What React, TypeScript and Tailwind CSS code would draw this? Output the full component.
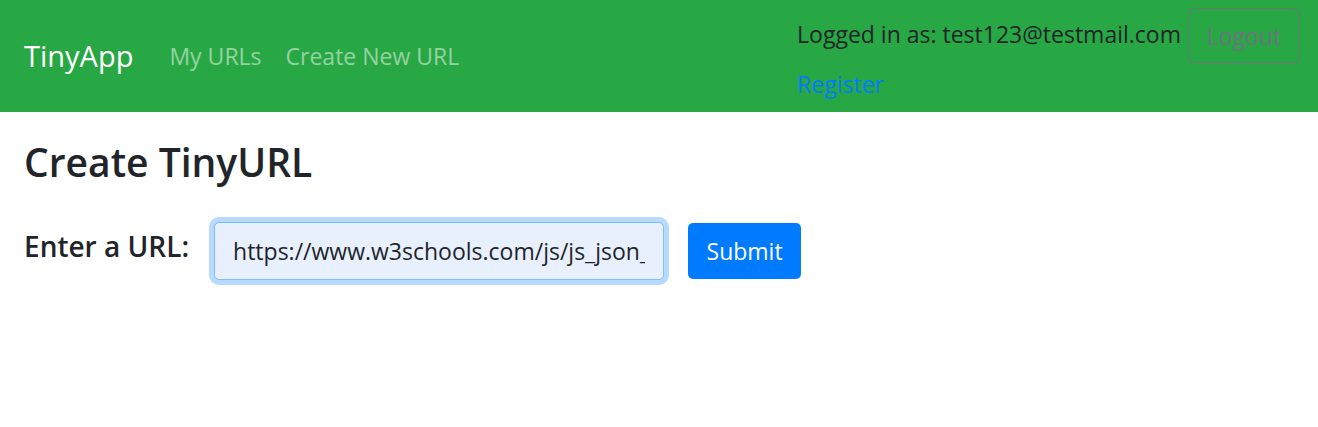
import { useState } from "react";

const font = { fontFamily: '"Open Sans", "Noto Sans", sans-serif' };

function Navbar() {
  return (
    <nav className="flex h-[112px] items-start bg-[#28a745] pl-[24px] pr-[18px]">
      <div className="flex h-full items-center">
        <a className="text-[29px] leading-[40px] text-white">TinyApp</a>
        <ul className="ml-[36px] flex gap-[24px] text-[23px] text-white/50">
          <li>My URLs</li>
          <li>Create New URL</li>
        </ul>
      </div>
      <div className="ml-auto flex items-start">
        <div className="mt-[16px] flex flex-col gap-[14px] text-[23px] leading-[36px]">
          <span className="text-[#212529]">Logged in as: test123@testmail.com</span>
          <a className="text-[#007bff]">Register</a>
        </div>
        <button className="ml-[7px] mt-[8px] h-[55px] w-[112px] rounded-[5px] border border-[#6c757d] pt-[2px] text-[23px] text-[#6c757d]">
          Logout
        </button>
      </div>
    </nav>
  );
}

export default function App() {
  const [url, setUrl] = useState("https://www.w3schools.com/js/js_json_intro.asp");

  return (
    <div className="min-h-[427px] bg-white text-[#212529]" style={font}>
      <Navbar />
      <main className="px-[24px]">
        <h2 className="mt-[26px] text-[39px] font-semibold leading-[48px]">Create TinyURL</h2>
        <form className="mt-[36px] flex items-center" onSubmit={(e) => e.preventDefault()}>
          <label className="mb-[10px] text-[28px] font-semibold">Enter a URL:</label>
          <input
            value={url}
            onChange={(e) => setUrl(e.target.value)}
            className="ml-[25px] h-[58px] w-[450px] rounded-[5px] border border-[#80bdff] bg-[#e8f0fe] px-[18px] text-[23px] outline-none ring-[5px] ring-[#b8daff]"
          />
          <button className="ml-[24px] h-[56px] w-[113px] rounded-[5px] bg-[#007bff] text-[23px] text-white">
            Submit
          </button>
        </form>
      </main>
    </div>
  );
}
